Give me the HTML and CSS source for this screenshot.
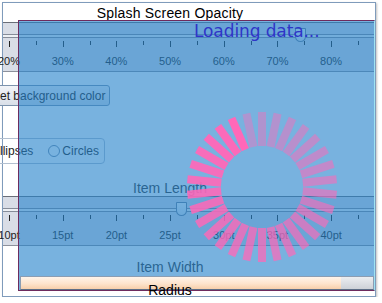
FILE: index.html
```html
<!DOCTYPE html>
<html lang="en">
<head>
    <meta charset="UTF-8">
    <meta name="viewport" content="width=device-width, initial-scale=1.0">
    <title>Splash Screen Opacity</title>
    <link rel="stylesheet" href="styles.css">
</head>
<body>
    <div class="window">
        <div class="caption title">Splash Screen Opacity</div>

        <div class="slider">
            <div class="track"></div>
            <div class="thumb" style="left: 292px;"></div>
            <div class="ticks">
                <span class="tick major"></span><span class="tick"></span>
                <span class="tick major"></span><span class="tick"></span>
                <span class="tick major"></span><span class="tick"></span>
                <span class="tick major"></span><span class="tick"></span>
                <span class="tick major"></span><span class="tick"></span>
                <span class="tick major"></span><span class="tick"></span>
                <span class="tick major"></span><span class="tick"></span>
            </div>
            <div class="tick-labels">
                <span>20%</span><span>30%</span><span>40%</span><span>50%</span>
                <span>60%</span><span>70%</span><span>80%</span>
            </div>
        </div>

        <div class="button-row">
            <button type="button" class="btn">Set background color</button>
        </div>

        <div class="shape-group">
            <label class="radio"><span class="radio-dot"></span>Ellipses</label>
            <label class="radio"><span class="radio-dot"></span>Circles</label>
        </div>

        <div class="caption">Item Length</div>

        <div class="slider">
            <div class="track"></div>
            <div class="thumb" style="left: 173px;"></div>
            <div class="ticks">
                <span class="tick major"></span><span class="tick"></span>
                <span class="tick major"></span><span class="tick"></span>
                <span class="tick major"></span><span class="tick"></span>
                <span class="tick major"></span><span class="tick"></span>
                <span class="tick major"></span><span class="tick"></span>
                <span class="tick major"></span><span class="tick"></span>
                <span class="tick major"></span><span class="tick"></span>
            </div>
            <div class="tick-labels">
                <span>10pt</span><span>15pt</span><span>20pt</span><span>25pt</span>
                <span>30pt</span><span>35pt</span><span>40pt</span>
            </div>
        </div>

        <div class="caption item-width">Item Width</div>
        <div class="caption radius">Radius</div>

        <!-- splash screen laid over the settings -->
        <div class="splash">
            <div class="loading">Loading data...</div>
            <svg class="spinner" width="152" height="152" viewBox="-76 -76 152 152">
                <g fill="#ff68b8">
                    <rect x="-4" y="-75" width="8" height="34" transform="rotate(-24)" opacity="1"/>
                    <rect x="-4" y="-75" width="8" height="34" transform="rotate(-36)" opacity="0.98"/>
                    <rect x="-4" y="-75" width="8" height="34" transform="rotate(-48)" opacity="0.96"/>
                    <rect x="-4" y="-75" width="8" height="34" transform="rotate(-60)" opacity="0.94"/>
                    <rect x="-4" y="-75" width="8" height="34" transform="rotate(-72)" opacity="0.92"/>
                    <rect x="-4" y="-75" width="8" height="34" transform="rotate(-84)" opacity="0.9"/>
                    <rect x="-4" y="-75" width="8" height="34" transform="rotate(-96)" opacity="0.88"/>
                    <rect x="-4" y="-75" width="8" height="34" transform="rotate(-108)" opacity="0.86"/>
                    <rect x="-4" y="-75" width="8" height="34" transform="rotate(-120)" opacity="0.83"/>
                    <rect x="-4" y="-75" width="8" height="34" transform="rotate(-132)" opacity="0.81"/>
                    <rect x="-4" y="-75" width="8" height="34" transform="rotate(-144)" opacity="0.79"/>
                    <rect x="-4" y="-75" width="8" height="34" transform="rotate(-156)" opacity="0.77"/>
                    <rect x="-4" y="-75" width="8" height="34" transform="rotate(-168)" opacity="0.75"/>
                    <rect x="-4" y="-75" width="8" height="34" transform="rotate(-180)" opacity="0.73"/>
                    <rect x="-4" y="-75" width="8" height="34" transform="rotate(-192)" opacity="0.71"/>
                    <rect x="-4" y="-75" width="8" height="34" transform="rotate(-204)" opacity="0.69"/>
                    <rect x="-4" y="-75" width="8" height="34" transform="rotate(-216)" opacity="0.67"/>
                    <rect x="-4" y="-75" width="8" height="34" transform="rotate(-228)" opacity="0.65"/>
                    <rect x="-4" y="-75" width="8" height="34" transform="rotate(-240)" opacity="0.63"/>
                    <rect x="-4" y="-75" width="8" height="34" transform="rotate(-252)" opacity="0.61"/>
                    <rect x="-4" y="-75" width="8" height="34" transform="rotate(-264)" opacity="0.59"/>
                    <rect x="-4" y="-75" width="8" height="34" transform="rotate(-276)" opacity="0.57"/>
                    <rect x="-4" y="-75" width="8" height="34" transform="rotate(-288)" opacity="0.55"/>
                    <rect x="-4" y="-75" width="8" height="34" transform="rotate(-300)" opacity="0.52"/>
                    <rect x="-4" y="-75" width="8" height="34" transform="rotate(-312)" opacity="0.5"/>
                    <rect x="-4" y="-75" width="8" height="34" transform="rotate(-324)" opacity="0.48"/>
                    <rect x="-4" y="-75" width="8" height="34" transform="rotate(-336)" opacity="0.46"/>
                    <rect x="-4" y="-75" width="8" height="34" transform="rotate(-348)" opacity="0.44"/>
                    <rect x="-4" y="-75" width="8" height="34" transform="rotate(-360)" opacity="0.42"/>
                    <rect x="-4" y="-75" width="8" height="34" transform="rotate(-372)" opacity="0.4"/>
                </g>
            </svg>
            <div class="progress">
                <div class="progress-fill" style="width: 91%;"></div>
            </div>
        </div>
    </div>
</body>
</html>
```

FILE: styles.css
```css
* {
    margin: 0;
    padding: 0;
    box-sizing: border-box;
}

body {
    font-family: "Liberation Sans", Arial, sans-serif;
    background-color: #fff;
    color: #222;
    overflow: hidden;
}

.window {
    position: relative;
    width: 374px;
    height: 295px;
    margin: 2px 0 0 2px;
    border: 1px solid #7f9bbb;
    box-shadow: 1px 1px 2px rgba(0, 0, 0, 0.25);
}

.caption {
    width: 334px;
    text-align: center;
    font-size: 14px;
    line-height: 16px;
    color: #333;
}

.title {
    height: 19px;
    padding-top: 1px;
    line-height: 18px;
    letter-spacing: 0.2px;
    color: #000;
}

/* sliders */
.slider {
    position: relative;
    height: 50px;
    background-color: #d9dde6;
    border-top: 1px solid #6a6e78;
    border-bottom: 1px solid #8d919c;
}

.track {
    margin-top: 11px;
    height: 4px;
    background-color: #eef1f5;
    border-top: 1px solid #868c98;
    border-bottom: 1px solid #868c98;
}

.thumb {
    position: absolute;
    top: 5px;
    width: 11px;
    height: 14px;
    border: 1px solid #6b7f99;
    border-radius: 1px 1px 6px 6px;
    background: linear-gradient(#f6f8fb, #dce4ee);
}

.ticks {
    display: flex;
    align-items: flex-start;
    height: 6px;
    margin-top: 3px;
    padding-left: 6px;
}

.tick {
    flex: none;
    width: 26.85px;
    height: 4px;
    border-left: 1px solid #222;
}

.tick.major {
    height: 6px;
}

.tick-labels {
    display: flex;
    margin-top: 8px;
    margin-left: -20.85px;
    font-size: 11px;
    line-height: 12px;
}

.tick-labels span {
    flex: none;
    width: 53.7px;
    text-align: center;
}

/* button and radio group */
.button-row {
    height: 21px;
    margin-top: 13px;
}

.btn {
    height: 21px;
    margin-left: -16px;
    padding: 0 4px;
    font-family: "Liberation Sans", Arial, sans-serif;
    font-size: 12px;
    color: #222;
    border: 1px solid #7d93ad;
    border-radius: 3px;
    background: linear-gradient(#f2f4f8, #d9dfe8);
}

.shape-group {
    display: flex;
    align-items: center;
    gap: 15px;
    width: max-content;
    height: 26px;
    margin: 32px 0 0 -32px;
    padding: 0 5px 0 6px;
    font-size: 12px;
    color: #222;
    border: 1px solid #b3c0d0;
    border-radius: 4px;
}

.radio {
    display: flex;
    align-items: center;
    gap: 2px;
}

.radio-dot {
    width: 12px;
    height: 12px;
    border: 1px solid #7088a4;
    border-radius: 50%;
    background-color: #fff;
}

.shape-group + .caption {
    margin-top: 16px;
}

.item-width {
    margin-top: 13px;
}

.radius {
    position: relative;
    z-index: 2;
    margin-top: 7px;
    color: #000;
}

/* splash overlay */
.splash {
    position: absolute;
    top: 17px;
    left: 15px;
    right: 0;
    bottom: 5px;
    z-index: 1;
    display: flex;
    flex-direction: column;
    background-color: rgba(37, 130, 204, 0.62);
    border: 1px solid #6e2c5e;
    border-right-color: #9fe3f3;
}

.loading {
    padding-left: 175px;
    font-family: "DejaVu Sans", sans-serif;
    font-size: 17px;
    line-height: 20px;
    letter-spacing: -0.1px;
    color: #2f35c8;
}

.spinner {
    display: block;
    margin: 70px 0 0 167px;
}

.progress {
    height: 14px;
    margin-top: auto;
    margin-left: 1px;
    border: 1px solid #8c9db2;
    border-bottom-color: #5d6e86;
    background: linear-gradient(#eceef1, #cdd1d7);
}

.progress-fill {
    height: 100%;
    background: linear-gradient(#fff4ea, #fde4cd 55%, #f7cfaa);
}
```
